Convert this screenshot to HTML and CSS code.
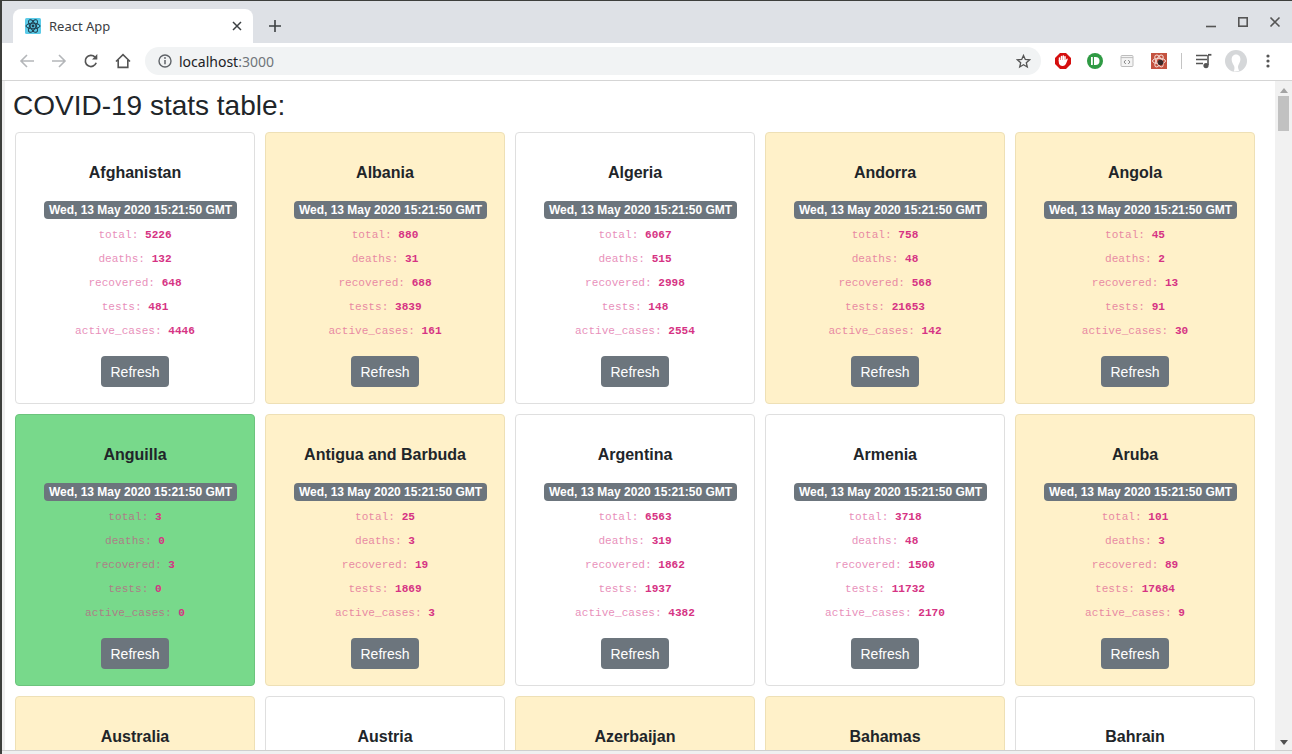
FILE: index.html
```html
<!DOCTYPE html>
<html lang="en">
<head>
    <meta charset="UTF-8">
    <meta name="viewport" content="width=device-width, initial-scale=1.0">
    <title>React App</title>
    <link rel="stylesheet" href="styles.css">
</head>
<body>
<div class="window">

    <!-- tab strip -->
    <div class="tabstrip">
        <div class="tab">
            <svg class="favicon" width="16" height="16" viewBox="0 0 16 16">
                <rect width="16" height="16" rx="1.5" fill="#5ccbe8"/>
                <g fill="none" stroke="#1d3a4a" stroke-width="1">
                    <ellipse cx="8" cy="8" rx="7" ry="2.8"/>
                    <ellipse cx="8" cy="8" rx="7" ry="2.8" transform="rotate(60 8 8)"/>
                    <ellipse cx="8" cy="8" rx="7" ry="2.8" transform="rotate(120 8 8)"/>
                </g>
                <circle cx="8" cy="8" r="1.4" fill="#1d3a4a"/>
            </svg>
            <span class="tab-title">React App</span>
            <svg class="tab-close" width="10" height="10" viewBox="0 0 10 10">
                <path d="M1 1l8 8M9 1l-8 8" stroke="#3c4043" stroke-width="1.5" fill="none"/>
            </svg>
        </div>
        <svg class="new-tab" width="12" height="12" viewBox="0 0 12 12">
            <path d="M6 0v12M0 6h12" stroke="#3c4043" stroke-width="1.6" fill="none"/>
        </svg>
        <div class="win-controls">
            <svg width="12" height="12" viewBox="0 0 12 12"><path d="M1 10.500h10" stroke="#555" stroke-width="1.6" fill="none"/></svg>
            <svg width="12" height="12" viewBox="0 0 12 12"><rect x="1.800" y="1.800" width="8.400" height="8.400" stroke="#555" stroke-width="1.6" fill="none"/></svg>
            <svg width="12" height="12" viewBox="0 0 12 12"><path d="M1.500 1.500l9 9M10.500 1.500l-9 9" stroke="#555" stroke-width="1.6" fill="none"/></svg>
        </div>
    </div>

    <!-- toolbar -->
    <div class="toolbar">
        <div class="tool">
            <svg width="16" height="16" viewBox="0 0 16 16"><path d="M15 8H2M8 2L2 8l6 6" stroke="#b4b6b9" stroke-width="1.6" fill="none"/></svg>
        </div>
        <div class="tool">
            <svg width="16" height="16" viewBox="0 0 16 16"><path d="M1 8h13M8 2l6 6-6 6" stroke="#b4b6b9" stroke-width="1.6" fill="none"/></svg>
        </div>
        <div class="tool">
            <svg width="16" height="16" viewBox="0 0 16 16"><path d="M13.200 9.800A5.600 5.600 0 1 1 12 4.100" stroke="#555" stroke-width="1.7" fill="none"/><path d="M14.300 1v5.400H9z" fill="#555"/></svg>
        </div>
        <div class="tool">
            <svg width="16" height="16" viewBox="0 0 16 16"><path d="M1 8.500L8 1.600l7 6.900M3.200 7v7.400h9.600V7" stroke="#555" stroke-width="1.6" fill="none"/></svg>
        </div>
        <div class="omnibox">
            <svg width="14" height="14" viewBox="0 0 14 14">
                <circle cx="7" cy="7" r="6" stroke="#5f6368" stroke-width="1.4" fill="none"/>
                <path d="M7 6v4.200" stroke="#5f6368" stroke-width="1.5"/>
                <circle cx="7" cy="4" r="0.9" fill="#5f6368"/>
            </svg>
            <span class="url">localhost<span class="url-port">:3000</span></span>
            <svg class="star" width="15" height="15" viewBox="0 0 15 15"><path d="M7.500 1.400l1.800 4 4.300.4-3.300 2.900 1 4.300-3.800-2.300-3.800 2.300 1-4.300L1.400 5.800l4.300-.4z" stroke="#555" stroke-width="1.3" fill="none"/></svg>
        </div>
        <div class="tool">
            <svg width="16" height="16" viewBox="0 0 16 16">
                <path d="M5 0h6l5 5v6l-5 5H5l-5-5V5z" fill="#d50f0f"/>
                <path d="M4.500 8V5M6.500 7V3.400M8.300 7V3M10 7V3.800" stroke="#fff" stroke-width="1.500" stroke-linecap="round" fill="none"/>
                <path d="M3.800 7h7l.9-1.200c.5-.5 1.300 0 1 .7l-1.500 3.700c-.6 1.600-1.700 2.800-3.500 2.800-2.400 0-3.900-1.500-3.900-3.800z" fill="#fff"/>
            </svg>
        </div>
        <div class="tool">
            <svg width="16" height="16" viewBox="0 0 16 16">
                <circle cx="8" cy="8" r="8" fill="#2f9a44"/>
                <rect x="4" y="4" width="1.800" height="8" fill="#fff"/>
                <path d="M7 4h1.500a4 4 0 0 1 0 8H7z" fill="#fff"/>
            </svg>
        </div>
        <div class="tool">
            <svg width="14" height="14" viewBox="0 0 14 14">
                <rect x="1" y="1.500" width="12" height="11" rx="1" fill="#f4f4f4" stroke="#bdbdbd"/>
                <path d="M1 3.600h12" stroke="#bdbdbd"/>
                <path d="M5.800 6l-1.800 2 1.800 2M8.200 6l1.800 2-1.800 2" stroke="#8a8a8a" fill="none"/>
            </svg>
        </div>
        <div class="tool">
            <svg width="16" height="16" viewBox="0 0 16 16">
                <rect width="16" height="16" fill="#c4523f"/>
                <g fill="none" stroke="#f6dcd5" stroke-width="1">
                    <ellipse cx="8" cy="8" rx="6.500" ry="2.700"/>
                    <ellipse cx="8" cy="8" rx="6.500" ry="2.700" transform="rotate(60 8 8)"/>
                    <ellipse cx="8" cy="8" rx="6.500" ry="2.700" transform="rotate(120 8 8)"/>
                </g>
                <circle cx="9.500" cy="9.500" r="2.800" fill="#3a2a2a"/>
            </svg>
        </div>
        <div class="toolbar-sep"></div>
        <div class="tool">
            <svg width="16" height="16" viewBox="0 0 16 16">
                <path d="M0 2.500h11M0 6.500h11M0 10.500h7" stroke="#555" stroke-width="1.4" fill="none"/>
                <path d="M12 2v10" stroke="#555" stroke-width="1.6"/>
                <path d="M12 1.800h3.400" stroke="#555" stroke-width="1.8"/>
                <circle cx="10" cy="12.600" r="2.600" fill="#555"/>
            </svg>
        </div>
        <div class="tool">
            <svg width="22" height="22" viewBox="0 0 22 22">
                <circle cx="11" cy="11" r="11" fill="#d5d7d9"/>
                <path d="M11 4.500c3 0 4.600 2.300 4.400 5.200-.2 2.500-1.700 4.200-2.300 6.300-.3 1.400.2 3 1.100 4.800a11 11 0 0 1-5.500.6c.9-1.800 1-3.700.4-5.400-.8-2-2.300-3.800-2.400-6.100C6.600 6.800 8 4.500 11 4.500z" fill="#fff"/>
            </svg>
        </div>
        <div class="tool">
            <svg width="4" height="14" viewBox="0 0 4 14">
                <circle cx="2" cy="2" r="1.600" fill="#555"/>
                <circle cx="2" cy="7" r="1.600" fill="#555"/>
                <circle cx="2" cy="12" r="1.600" fill="#555"/>
            </svg>
        </div>
    </div>

    <!-- page -->
    <div class="viewport">
        <main class="page">
            <h3 class="page-title">COVID-19 stats table:</h3>
            <div class="card-grid">

                <div class="card">
                    <h5 class="card-title">Afghanistan</h5>
                    <span class="badge">Wed, 13 May 2020 15:21:50 GMT</span>
                    <div class="stat"><span>total: </span><b>5226</b></div>
                    <div class="stat"><span>deaths: </span><b>132</b></div>
                    <div class="stat"><span>recovered: </span><b>648</b></div>
                    <div class="stat"><span>tests: </span><b>481</b></div>
                    <div class="stat"><span>active_cases: </span><b>4446</b></div>
                    <button class="btn">Refresh</button>
                </div>

                <div class="card card-warning">
                    <h5 class="card-title">Albania</h5>
                    <span class="badge">Wed, 13 May 2020 15:21:50 GMT</span>
                    <div class="stat"><span>total: </span><b>880</b></div>
                    <div class="stat"><span>deaths: </span><b>31</b></div>
                    <div class="stat"><span>recovered: </span><b>688</b></div>
                    <div class="stat"><span>tests: </span><b>3839</b></div>
                    <div class="stat"><span>active_cases: </span><b>161</b></div>
                    <button class="btn">Refresh</button>
                </div>

                <div class="card">
                    <h5 class="card-title">Algeria</h5>
                    <span class="badge">Wed, 13 May 2020 15:21:50 GMT</span>
                    <div class="stat"><span>total: </span><b>6067</b></div>
                    <div class="stat"><span>deaths: </span><b>515</b></div>
                    <div class="stat"><span>recovered: </span><b>2998</b></div>
                    <div class="stat"><span>tests: </span><b>148</b></div>
                    <div class="stat"><span>active_cases: </span><b>2554</b></div>
                    <button class="btn">Refresh</button>
                </div>

                <div class="card card-warning">
                    <h5 class="card-title">Andorra</h5>
                    <span class="badge">Wed, 13 May 2020 15:21:50 GMT</span>
                    <div class="stat"><span>total: </span><b>758</b></div>
                    <div class="stat"><span>deaths: </span><b>48</b></div>
                    <div class="stat"><span>recovered: </span><b>568</b></div>
                    <div class="stat"><span>tests: </span><b>21653</b></div>
                    <div class="stat"><span>active_cases: </span><b>142</b></div>
                    <button class="btn">Refresh</button>
                </div>

                <div class="card card-warning">
                    <h5 class="card-title">Angola</h5>
                    <span class="badge">Wed, 13 May 2020 15:21:50 GMT</span>
                    <div class="stat"><span>total: </span><b>45</b></div>
                    <div class="stat"><span>deaths: </span><b>2</b></div>
                    <div class="stat"><span>recovered: </span><b>13</b></div>
                    <div class="stat"><span>tests: </span><b>91</b></div>
                    <div class="stat"><span>active_cases: </span><b>30</b></div>
                    <button class="btn">Refresh</button>
                </div>

                <div class="card card-success">
                    <h5 class="card-title">Anguilla</h5>
                    <span class="badge">Wed, 13 May 2020 15:21:50 GMT</span>
                    <div class="stat"><span>total: </span><b>3</b></div>
                    <div class="stat"><span>deaths: </span><b>0</b></div>
                    <div class="stat"><span>recovered: </span><b>3</b></div>
                    <div class="stat"><span>tests: </span><b>0</b></div>
                    <div class="stat"><span>active_cases: </span><b>0</b></div>
                    <button class="btn">Refresh</button>
                </div>

                <div class="card card-warning">
                    <h5 class="card-title">Antigua and Barbuda</h5>
                    <span class="badge">Wed, 13 May 2020 15:21:50 GMT</span>
                    <div class="stat"><span>total: </span><b>25</b></div>
                    <div class="stat"><span>deaths: </span><b>3</b></div>
                    <div class="stat"><span>recovered: </span><b>19</b></div>
                    <div class="stat"><span>tests: </span><b>1869</b></div>
                    <div class="stat"><span>active_cases: </span><b>3</b></div>
                    <button class="btn">Refresh</button>
                </div>

                <div class="card">
                    <h5 class="card-title">Argentina</h5>
                    <span class="badge">Wed, 13 May 2020 15:21:50 GMT</span>
                    <div class="stat"><span>total: </span><b>6563</b></div>
                    <div class="stat"><span>deaths: </span><b>319</b></div>
                    <div class="stat"><span>recovered: </span><b>1862</b></div>
                    <div class="stat"><span>tests: </span><b>1937</b></div>
                    <div class="stat"><span>active_cases: </span><b>4382</b></div>
                    <button class="btn">Refresh</button>
                </div>

                <div class="card">
                    <h5 class="card-title">Armenia</h5>
                    <span class="badge">Wed, 13 May 2020 15:21:50 GMT</span>
                    <div class="stat"><span>total: </span><b>3718</b></div>
                    <div class="stat"><span>deaths: </span><b>48</b></div>
                    <div class="stat"><span>recovered: </span><b>1500</b></div>
                    <div class="stat"><span>tests: </span><b>11732</b></div>
                    <div class="stat"><span>active_cases: </span><b>2170</b></div>
                    <button class="btn">Refresh</button>
                </div>

                <div class="card card-warning">
                    <h5 class="card-title">Aruba</h5>
                    <span class="badge">Wed, 13 May 2020 15:21:50 GMT</span>
                    <div class="stat"><span>total: </span><b>101</b></div>
                    <div class="stat"><span>deaths: </span><b>3</b></div>
                    <div class="stat"><span>recovered: </span><b>89</b></div>
                    <div class="stat"><span>tests: </span><b>17684</b></div>
                    <div class="stat"><span>active_cases: </span><b>9</b></div>
                    <button class="btn">Refresh</button>
                </div>

                <div class="card card-warning"><h5 class="card-title">Australia</h5></div>
                <div class="card"><h5 class="card-title">Austria</h5></div>
                <div class="card card-warning"><h5 class="card-title">Azerbaijan</h5></div>
                <div class="card card-warning"><h5 class="card-title">Bahamas</h5></div>
                <div class="card"><h5 class="card-title">Bahrain</h5></div>

            </div>
        </main>

        <div class="scrollbar">
            <div class="arrow-up"></div>
            <div class="thumb"></div>
            <div class="arrow-down"></div>
        </div>
    </div>

    <div class="status-edge"></div>
</div>
</body>
</html>
```

FILE: styles.css
```css
html, body {
    margin: 0;
    height: 100%;
    overflow: hidden;
    background: #3d3f3c;
}
.window {
    height: 100vh;
    box-sizing: border-box;
    padding: 1px 0 0 2px;
    display: flex;
    flex-direction: column;
    font-family: "Liberation Sans", Arial, sans-serif;
}

/* tab strip */
.tabstrip {
    height: 42px;
    flex: none;
    background: #dee1e6;
    display: flex;
    align-items: flex-end;
    padding-left: 11px;
}
.tab {
    width: 240px;
    height: 34px;
    background: #fff;
    border-radius: 8px 8px 0 0;
    display: flex;
    align-items: center;
    padding: 0 12px;
    box-sizing: border-box;
}
.tab-title {
    margin-left: 8px;
    font-family: "Noto Sans", sans-serif;
    font-size: 13px;
    color: #3c4043;
    flex: 1;
}
.tab-close {
    margin-right: -1px;
}
.new-tab {
    margin: 0 0 11px 16px;
}
.win-controls {
    margin-left: auto;
    align-self: flex-start;
    display: flex;
    gap: 20px;
    padding: 15px 11px 0 0;
}

/* toolbar */
.toolbar {
    height: 36px;
    flex: none;
    background: #fff;
    border-bottom: 1px solid #d5d5d5;
    display: flex;
    align-items: center;
    padding: 0 0 1px 9px;
}
.tool {
    width: 32px;
    height: 32px;
    display: flex;
    align-items: center;
    justify-content: center;
    flex: none;
}
.omnibox {
    width: 896px;
    height: 28px;
    margin: 0 6px;
    flex: none;
    box-sizing: border-box;
    background: #f1f3f4;
    border-radius: 14px;
    display: flex;
    align-items: center;
    padding: 0 10px 0 13px;
}
.url {
    margin-left: 7px;
    font-family: "Noto Sans", sans-serif;
    font-size: 14px;
    color: #202124;
    flex: 1;
}
.url-port {
    color: #70757a;
}
.toolbar-sep {
    width: 1px;
    height: 16px;
    background: #c4c4c4;
    margin: 0 6px;
    flex: none;
}

/* page */
.viewport {
    flex: 1;
    min-height: 0;
    display: flex;
    background: #fff;
    border-left: 3px solid #efefef;
}
.page {
    flex: 1;
    min-width: 0;
    overflow: hidden;
    padding-left: 8px;
}
.page-title {
    margin: 7px 0 0;
    font-size: 28px;
    font-weight: 400;
    line-height: 36px;
    color: #212529;
}
.card-grid {
    display: grid;
    grid-template-columns: repeat(5, 240px);
    gap: 10px;
    margin: 8px 0 0 2px;
}
.card {
    min-height: 272px;
    box-sizing: border-box;
    background: #fff;
    border: 1px solid #dfdfdf;
    border-radius: 4px;
    padding: 30px 0 15px;
    display: flex;
    flex-direction: column;
    align-items: center;
}
.card-warning {
    background: #fff1c9;
    border-color: #eee0b6;
}
.card-success {
    background: #78d98b;
    border-color: #6cc47d;
}
.card-title {
    margin: 0 0 19px;
    font-size: 16px;
    line-height: 19px;
    font-weight: 700;
    color: #212529;
}
/* the badge sits right of centre in the cards */
.badge {
    height: 18px;
    line-height: 18px;
    padding: 0 5px;
    margin: 0 0 4px 11px;
    border-radius: 4px;
    background: #6c757d;
    color: #fff;
    font-size: 12px;
    font-weight: 700;
}
.stat {
    height: 24px;
    line-height: 24px;
    font-family: "Liberation Mono", "Courier New", monospace;
    font-size: 11.1px;
    white-space: pre;
    color: #d63384;
}
.stat span {
    opacity: 0.55;
}
.btn {
    margin-top: 13px;
    width: 68px;
    height: 31px;
    padding: 0;
    border: none;
    border-radius: 4px;
    background: #6c757d;
    color: #fff;
    font-family: inherit;
    font-size: 14px;
}

/* scrollbar */
.scrollbar {
    width: 17px;
    flex: none;
    background: #f1f1f1;
    display: flex;
    flex-direction: column;
    align-items: center;
}
.arrow-up {
    margin-top: 7px;
    border: 4px solid transparent;
    border-top: 0;
    border-bottom: 5px solid #a3a3a3;
}
.thumb {
    width: 11px;
    height: 35px;
    margin-top: 3px;
    background: #c1c1c1;
}
.arrow-down {
    margin-top: auto;
    margin-bottom: 5px;
    border: 4px solid transparent;
    border-bottom: 0;
    border-top: 5px solid #505050;
}
.status-edge {
    height: 3px;
    flex: none;
    background: #f0f0f0;
    border-top: 1px solid #cfcfcf;
}
```
